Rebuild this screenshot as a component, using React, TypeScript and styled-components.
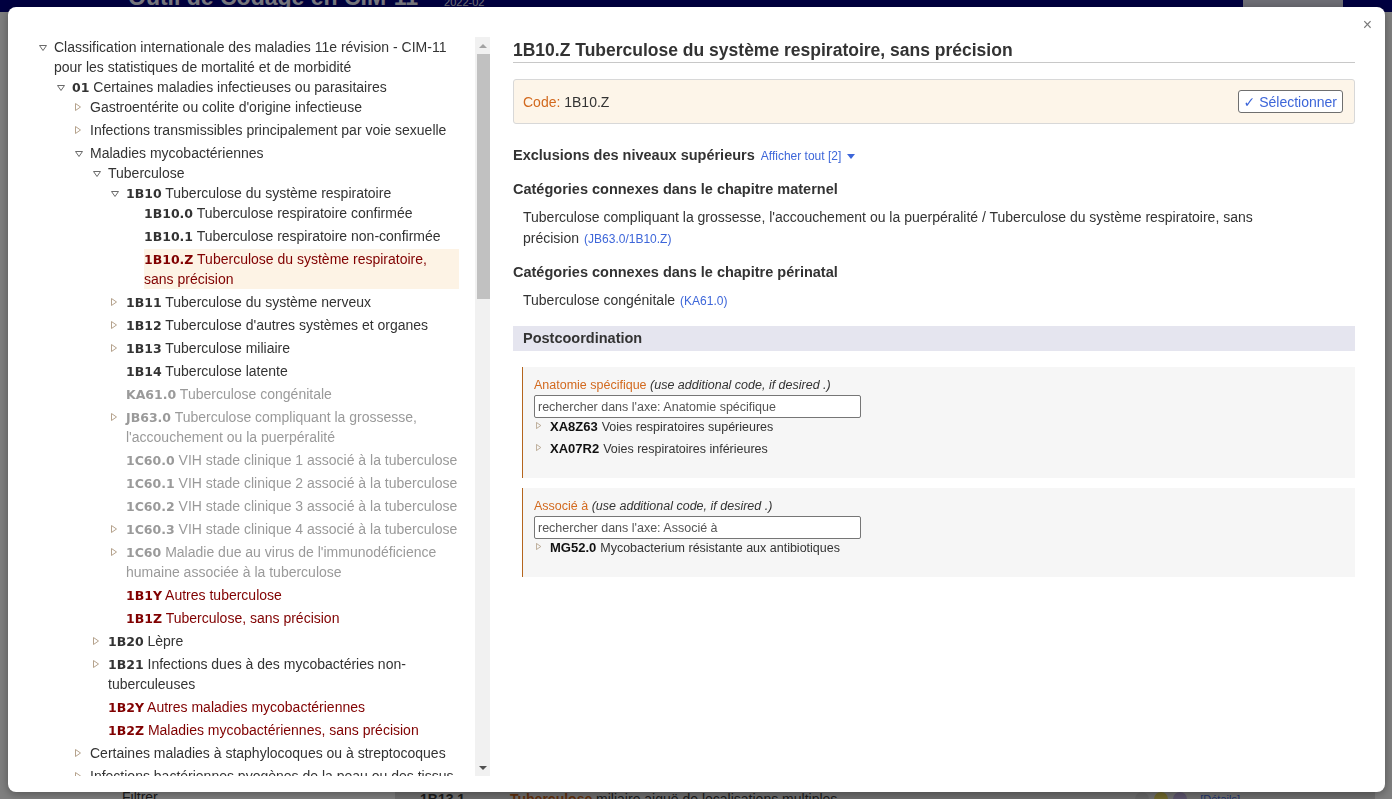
import React from "react";
import styled, { createGlobalStyle } from "styled-components";

type Tone = "normal" | "muted" | "residual";

type TreeNode = {
  code?: string;
  label: string;
  tone?: Tone;
  open?: boolean;
  closed?: boolean;
  selected?: boolean;
  children?: TreeNode[];
};

const toneColor: Record<Tone, string> = {
  normal: "#333333",
  muted: "#9a9a9a",
  residual: "#800000",
};

const GlobalStyle = createGlobalStyle`
  html, body {
    margin: 0;
    padding: 0;
    background: #fff;
    overflow: hidden;
  }
  body {
    font-family: "Liberation Sans", Arial, sans-serif;
    color: #333;
  }
`;

/* ---------- page behind the dialog ---------- */

const Page = styled.div`
  height: 799px;
  overflow: hidden;
`;

const TopBar = styled.header`
  margin-top: -38px;
  height: 50px;
  background: #000080;
  display: flex;
  align-items: flex-end;
  padding: 0 49px 0 128px;
`;

const AppTitle = styled.div`
  font-size: 23px;
  line-height: 23px;
  font-weight: bold;
  color: #f0f0ff;
  margin-bottom: 3px;
`;

const Version = styled.div`
  margin: 0 0 4px 26px;
  font-size: 11px;
  line-height: 11px;
  color: #e0e0f0;
`;

const HelpButton = styled.div`
  margin-left: auto;
  width: 100px;
  height: 34px;
  background: #dcdcea;
  color: #333;
  font-size: 14px;
  display: flex;
  align-items: center;
  justify-content: center;
`;

const Content = styled.div`
  display: flex;
  padding-top: 18px;
`;

const Sidebar = styled.aside`
  width: 395px;
  flex: none;
  display: flex;
  flex-direction: column;
  justify-content: flex-end;
  padding: 0 0 6px 122px;
  box-sizing: border-box;
  font-size: 14px;
  line-height: 20px;
`;

const Results = styled.div`
  flex: 1;
  margin-right: 17px;
`;

const ResultRow = styled.div<{ $shade?: boolean }>`
  height: 29px;
  display: flex;
  align-items: center;
  font-size: 14px;
  background: ${({ $shade }) => ($shade ? "#dedede" : "#f4f4f4")};
`;

const ResultCode = styled.b`
  width: 90px;
  padding-left: 25px;
  flex: none;
`;

const ResultTitle = styled.span`
  flex: 1;
  b {
    color: #c0601a;
  }
`;

const Badge = styled.span<{ $color: string }>`
  width: 14px;
  height: 14px;
  border-radius: 50%;
  background: ${({ $color }) => $color};
  margin-right: 5px;
`;

const Details = styled.span`
  font-size: 11px;
  color: #3d66d9;
  margin: 0 135px 0 8px;
`;

/* ---------- dialog ---------- */

const Overlay = styled.div`
  position: fixed;
  inset: 0;
  background: rgba(0, 0, 0, 0.5);
`;

const Dialog = styled.div`
  position: fixed;
  left: 8px;
  top: 7px;
  width: 1377px;
  height: 785px;
  box-sizing: border-box;
  padding: 30px 30px 0 22px;
  background: #fff;
  border-radius: 8px;
  box-shadow: 0 2px 10px rgba(0, 0, 0, 0.35);
  display: flex;
  gap: 23px;
`;

const CloseButton = styled.span`
  position: absolute;
  top: 9px;
  right: 13px;
  font-size: 16px;
  color: #7a7a7a;
  cursor: pointer;
`;

const TreePane = styled.div`
  flex: none;
  width: 460px;
  height: 739px;
  display: flex;
`;

const TreeViewport = styled.div`
  flex: 1;
  min-width: 0;
  overflow: hidden;
`;

const ScrollTrack = styled.div`
  flex: none;
  width: 15px;
  background: #f1f1f1;
  display: flex;
  flex-direction: column;
`;

const ScrollButton = styled.div`
  height: 17px;
  flex: none;
  display: flex;
  align-items: center;
  justify-content: center;
`;

const ScrollRail = styled.div`
  flex: 1;
`;

const ScrollThumb = styled.div`
  height: 245px;
  margin-left: 2px;
  background: #c1c1c1;
`;

const TreeRoot = styled.div`
  padding: 0 16px 0 8px;
  font-size: 14px;
  line-height: 20px;
`;

const NodeItem = styled.div`
  margin-bottom: 3px;
`;

const NodeRow = styled.div`
  display: flex;
  align-items: flex-start;
`;

const Toggle = styled.span<{ $open?: boolean }>`
  flex: none;
  width: 16px;
  height: 20px;
  box-sizing: border-box;
  padding: ${({ $open }) => ($open ? "8px 0 0 1px" : "6px 0 0 1px")};
  display: flex;
  align-items: flex-start;
`;

const NodeLabel = styled.span<{ $tone: Tone; $selected?: boolean }>`
  flex: 1;
  min-width: 0;
  color: ${({ $tone }) => toneColor[$tone]};
  background: ${({ $selected }) => ($selected ? "#fdf3e5" : "transparent")};
`;

const Code = styled.b`
  font-family: "DejaVu Sans", Verdana, sans-serif;
  font-size: 12.5px;
  line-height: 1;
`;

const Children = styled.div`
  padding-left: 18px;
`;

const DetailPane = styled.div`
  flex: 1;
  min-width: 0;
  color: #333;
`;

const Title = styled.h1`
  margin: 2px 0 0;
  font-size: 17.5px;
  line-height: 22px;
  font-weight: bold;
  padding-bottom: 1px;
  border-bottom: 1px solid #c8c8c8;
`;

const CodeBox = styled.div`
  margin-top: 16px;
  height: 45px;
  box-sizing: border-box;
  display: flex;
  align-items: center;
  justify-content: space-between;
  padding: 0 11px 0 9px;
  background: #fdf5e9;
  border: 1px solid #d8d8d8;
  border-radius: 3px;
  font-size: 14px;
`;

const CodeLabel = styled.span`
  color: #d2691e;
`;

const SelectButton = styled.button`
  height: 23px;
  padding: 0 5px;
  font: 14px "Liberation Sans", "DejaVu Sans", sans-serif;
  color: #3d66d9;
  background: #fff;
  border: 1px solid #6f6f6f;
  border-radius: 3px;
`;

const ExclusionsRow = styled.div`
  margin-top: 21px;
  display: flex;
  align-items: baseline;
  line-height: 20px;
`;

const Heading = styled.h2`
  margin: 0;
  font-size: 14.5px;
  line-height: 20px;
  font-weight: bold;
`;

const ShowAll = styled.span`
  margin-left: 6px;
  font-size: 12px;
  color: #3d66d9;
  display: inline-flex;
  align-items: center;
  gap: 6px;
`;

const Section = styled.section`
  margin-top: 13px;
`;

const SectionBody = styled.p`
  margin: 8px 0 0;
  padding-left: 10px;
  max-width: 770px;
  font-size: 14px;
  line-height: 21px;
`;

const RefLink = styled.span`
  margin-left: 5px;
  font-size: 12px;
  line-height: 1;
  color: #3d66d9;
`;

const PostcoBar = styled.div`
  margin-top: 15px;
  height: 25px;
  padding-left: 10px;
  background: #e5e5ef;
  font-size: 14.5px;
  line-height: 25px;
  font-weight: bold;
`;

const AxisBox = styled.div`
  margin: 16px 0 0 9px;
  padding: 10px 10px 18px 11px;
  background: #f6f6f6;
  border-left: 1px solid #b5651d;

  & + & {
    margin-top: 10px;
  }
`;

const AxisTitle = styled.div`
  font-size: 12.5px;
  line-height: 16px;
  color: #d2691e;

  em {
    color: #333;
  }
`;

const AxisSearch = styled.input`
  display: block;
  margin-top: 2px;
  width: 327px;
  height: 23px;
  box-sizing: border-box;
  padding: 0 3px;
  border: 1px solid #767676;
  border-radius: 2px;
  font: 12.5px "Liberation Sans", Arial, sans-serif;
  color: #333;
  background: #fff;

  &::placeholder {
    color: #555;
  }
`;

const AxisItems = styled.div`
  margin-top: -2px;
`;

const AxisItem = styled.div`
  display: flex;
  align-items: flex-start;
  font-size: 12.5px;
  line-height: 21px;
`;

const AxisToggle = styled.span`
  flex: none;
  width: 16px;
  padding: 6px 0 0 2px;
  box-sizing: border-box;
  display: flex;
`;

const AxisCode = styled.b`
  font-size: 13px;
  color: #111;
  margin-right: 4px;
`;

/* ---------- icons ---------- */

const OpenIcon = () => (
  <svg width="8" height="6" viewBox="0 0 8 6">
    <polygon points="0.5,0.5 7.5,0.5 4,5.5" fill="none" stroke="#6a6a6a" strokeWidth="1" />
  </svg>
);

const ClosedIcon = ({ size = 8 }: { size?: number }) => (
  <svg width={size * 0.75} height={size} viewBox="0 0 6 8">
    <polygon points="0.5,0.5 5.5,4 0.5,7.5" fill="none" stroke="#b5a28c" strokeWidth="1" />
  </svg>
);

const Caret = () => (
  <svg width="8" height="5" viewBox="0 0 8 5">
    <polygon points="0,0 8,0 4,5" fill="#3d66d9" />
  </svg>
);

const ArrowUp = () => (
  <svg width="8" height="4" viewBox="0 0 8 4">
    <polygon points="0,4 8,4 4,0" fill="#a3a3a3" />
  </svg>
);

const ArrowDown = () => (
  <svg width="8" height="4" viewBox="0 0 8 4">
    <polygon points="0,0 8,0 4,4" fill="#505050" />
  </svg>
);

/* ---------- data ---------- */

const muted = (code: string, label: string, closed = false): TreeNode => ({ code, label, tone: "muted", closed });
const residual = (code: string, label: string): TreeNode => ({ code, label, tone: "residual" });
const group = (label: string, code?: string): TreeNode => ({ code, label, closed: true });

const tree: TreeNode = {
  label:
    "Classification internationale des maladies 11e révision - CIM-11 pour les statistiques de mortalité et de morbidité",
  open: true,
  children: [
    {
      code: "01",
      label: "Certaines maladies infectieuses ou parasitaires",
      open: true,
      children: [
        group("Gastroentérite ou colite d'origine infectieuse"),
        group("Infections transmissibles principalement par voie sexuelle"),
        {
          label: "Maladies mycobactériennes",
          open: true,
          children: [
            {
              label: "Tuberculose",
              open: true,
              children: [
                {
                  code: "1B10",
                  label: "Tuberculose du système respiratoire",
                  open: true,
                  children: [
                    { code: "1B10.0", label: "Tuberculose respiratoire confirmée" },
                    { code: "1B10.1", label: "Tuberculose respiratoire non-confirmée" },
                    {
                      code: "1B10.Z",
                      label: "Tuberculose du système respiratoire, sans précision",
                      tone: "residual",
                      selected: true,
                    },
                  ],
                },
                group("Tuberculose du système nerveux", "1B11"),
                group("Tuberculose d'autres systèmes et organes", "1B12"),
                group("Tuberculose miliaire", "1B13"),
                { code: "1B14", label: "Tuberculose latente" },
                muted("KA61.0", "Tuberculose congénitale"),
                muted("JB63.0", "Tuberculose compliquant la grossesse, l'accouchement ou la puerpéralité", true),
                muted("1C60.0", "VIH stade clinique 1 associé à la tuberculose"),
                muted("1C60.1", "VIH stade clinique 2 associé à la tuberculose"),
                muted("1C60.2", "VIH stade clinique 3 associé à la tuberculose"),
                muted("1C60.3", "VIH stade clinique 4 associé à la tuberculose", true),
                muted("1C60", "Maladie due au virus de l'immunodéficience humaine associée à la tuberculose", true),
                residual("1B1Y", "Autres tuberculose"),
                residual("1B1Z", "Tuberculose, sans précision"),
              ],
            },
            group("Lèpre", "1B20"),
            group("Infections dues à des mycobactéries non-tuberculeuses", "1B21"),
            residual("1B2Y", "Autres maladies mycobactériennes"),
            residual("1B2Z", "Maladies mycobactériennes, sans précision"),
          ],
        },
        group("Certaines maladies à staphylocoques ou à streptocoques"),
        group("Infections bactériennes pyogènes de la peau ou des tissus sous-cutanés"),
        group("Certaines maladies bactériennes zoonotiques"),
        group("Autres maladies bactériennes"),
        group("Maladies dues à Chlamydia"),
        group("Rickettsioses"),
        group("Infections virales du système nerveux central"),
        group("Dengue"),
        group("Certaines fièvres virales transmises par les arthropodes"),
        group("Hépatite virale"),
        group("Autres maladies virales"),
        group("Mycoses"),
      ],
    },
    group("Tumeurs", "02"),
    group("Maladies du sang ou des organes hématopoïétiques", "03"),
    group("Maladies du système immunitaire", "04"),
    group("Maladies endocriniennes, nutritionnelles ou métaboliques", "05"),
    group("Troubles mentaux, comportementaux ou neurodéveloppementaux", "06"),
    group("Troubles du cycle veille-sommeil", "07"),
    group("Maladies du système nerveux", "08"),
    group("Maladies de l'appareil visuel", "09"),
    group("Maladies de l'oreille ou de l'apophyse mastoïde", "10"),
  ],
};

const hiddenResults: [string, string][] = [
  ["Code", "Titre"],
  ["1B10", "du système respiratoire"],
  ["1B10.0", "respiratoire confirmée"],
  ["1B10.1", "respiratoire non-confirmée"],
  ["1B10.Z", "du système respiratoire, sans précision"],
  ["1B11", "du système nerveux"],
  ["1B11.0", "Méningite tuberculeuse"],
  ["1B11.1", "Méningo-encéphalite tuberculeuse"],
  ["1B11.2", "Tuberculome cérébral"],
  ["1B11.3", "Polynévrite tuberculeuse"],
  ["1B11.Y", "Autres tuberculoses précisées du système nerveux"],
  ["1B11.Z", "du système nerveux, sans précision"],
  ["1B12", "d'autres systèmes et organes"],
  ["1B12.0", "du système cardiovasculaire"],
  ["1B12.1", "du système digestif"],
  ["1B12.2", "des organes génito-urinaires"],
  ["1B12.3", "de la peau"],
  ["1B12.4", "des os ou des articulations"],
  ["1B12.5", "du système lymphatique"],
  ["1B12.6", "de l'œil"],
  ["1B12.7", "de l'oreille"],
  ["1B12.8", "de la glande surrénale"],
  ["1B12.Y", "d'autres systèmes et organes précisés"],
  ["1B12.Z", "d'autres systèmes et organes, sans précision"],
  ["1B13", "miliaire"],
  ["1B13.0", "miliaire aiguë d'une seule localisation précisée"],
];

/* ---------- components ---------- */

const TreeItem = ({ node }: { node: TreeNode }) => {
  const tone = node.tone ?? "normal";
  return (
    <NodeItem>
      <NodeRow>
        <Toggle $open={node.open}>
          {node.open ? <OpenIcon /> : node.closed ? <ClosedIcon /> : null}
        </Toggle>
        <NodeLabel $tone={tone} $selected={node.selected}>
          {node.code && <Code>{node.code}</Code>}
          {node.code ? " " : ""}
          {node.label}
        </NodeLabel>
      </NodeRow>
      {node.open && node.children && (
        <Children>
          {node.children.map((child) => (
            <TreeItem key={(child.code ?? "") + child.label} node={child} />
          ))}
        </Children>
      )}
    </NodeItem>
  );
};

const axes = [
  {
    name: "Anatomie spécifique",
    items: [
      ["XA8Z63", "Voies respiratoires supérieures"],
      ["XA07R2", "Voies respiratoires inférieures"],
    ],
  },
  {
    name: "Associé à",
    items: [["MG52.0", "Mycobacterium résistante aux antibiotiques"]],
  },
];

export default function App() {
  return (
    <>
      <GlobalStyle />
      <Page>
        <TopBar>
          <AppTitle>Outil de Codage en CIM-11</AppTitle>
          <Version>2022-02</Version>
          <HelpButton>Aide</HelpButton>
        </TopBar>
        <Content>
          <Sidebar>Filtrer</Sidebar>
          <Results>
            {hiddenResults.map(([code, title], i) => (
              <ResultRow key={code} $shade={i % 2 === 1}>
                <ResultCode>{code}</ResultCode>
                <ResultTitle>{title}</ResultTitle>
              </ResultRow>
            ))}
            <ResultRow $shade>
              <ResultCode>1B13.1</ResultCode>
              <ResultTitle>
                <b>Tuberculose</b> miliaire aiguë de localisations multiples
              </ResultTitle>
              <Badge $color="#cfcfcf" />
              <Badge $color="#e2d25a" />
              <Badge $color="#b8a8d8" />
              <Details>[Détails]</Details>
            </ResultRow>
          </Results>
        </Content>
      </Page>

      <Overlay />
      <Dialog>
        <CloseButton>×</CloseButton>
        <TreePane>
          <TreeViewport>
            <TreeRoot>
              <TreeItem node={tree} />
            </TreeRoot>
          </TreeViewport>
          <ScrollTrack>
            <ScrollButton>
              <ArrowUp />
            </ScrollButton>
            <ScrollRail>
              <ScrollThumb />
            </ScrollRail>
            <ScrollButton>
              <ArrowDown />
            </ScrollButton>
          </ScrollTrack>
        </TreePane>

        <DetailPane>
          <Title>1B10.Z Tuberculose du système respiratoire, sans précision</Title>
          <CodeBox>
            <span>
              <CodeLabel>Code:</CodeLabel> 1B10.Z
            </span>
            <SelectButton>✓ Sélectionner</SelectButton>
          </CodeBox>

          <ExclusionsRow>
            <Heading>Exclusions des niveaux supérieurs</Heading>
            <ShowAll>
              Afficher tout [2] <Caret />
            </ShowAll>
          </ExclusionsRow>

          <Section>
            <Heading>Catégories connexes dans le chapitre maternel</Heading>
            <SectionBody>
              Tuberculose compliquant la grossesse, l'accouchement ou la puerpéralité / Tuberculose du système
              respiratoire, sans précision
              <RefLink>(JB63.0/1B10.Z)</RefLink>
            </SectionBody>
          </Section>

          <Section>
            <Heading>Catégories connexes dans le chapitre périnatal</Heading>
            <SectionBody>
              Tuberculose congénitale
              <RefLink>(KA61.0)</RefLink>
            </SectionBody>
          </Section>

          <PostcoBar>Postcoordination</PostcoBar>

          {axes.map((axis) => (
            <AxisBox key={axis.name}>
              <AxisTitle>
                {axis.name} <em>(use additional code, if desired .)</em>
              </AxisTitle>
              <AxisSearch placeholder={`rechercher dans l'axe: ${axis.name}`} />
              <AxisItems>
                {axis.items.map(([code, label]) => (
                  <AxisItem key={code}>
                    <AxisToggle>
                      <ClosedIcon size={7} />
                    </AxisToggle>
                    <span>
                      <AxisCode>{code}</AxisCode>
                      {label}
                    </span>
                  </AxisItem>
                ))}
              </AxisItems>
            </AxisBox>
          ))}
        </DetailPane>
      </Dialog>
    </>
  );
}
